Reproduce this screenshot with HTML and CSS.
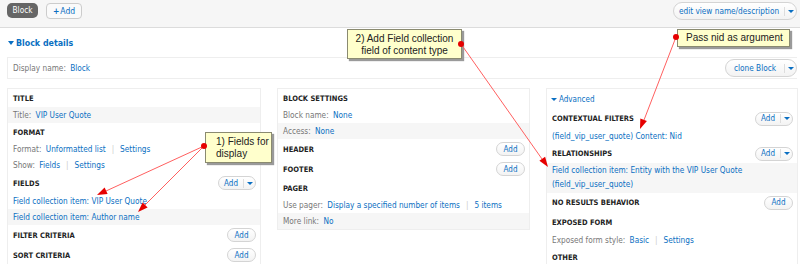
FILE: index.html
```html
<!DOCTYPE html>
<html>
<head>
    <title>Views UI - Block</title>
    <link rel="stylesheet" href="styles.css">
</head>
<body>
    <div class="tabs">
        <span class="tab-active">Block</span>
        <span class="tab-add"><b>+</b>Add</span>
        <span class="pill-btn edit-btn"><span class="lbl">edit view name/description</span><span class="caret"><i class="tri"></i></span></span>
    </div>

    <div class="details-head"><i class="tri big"></i>Block details</div>

    <div class="display-row">
        <span><span class="label">Display name:</span> <a>Block</a></span>
        <span class="pill-btn clone-btn"><span class="lbl">clone Block</span><span class="caret"><i class="tri"></i></span></span>
    </div>

    <div class="columns">
        <div class="col">
            <div class="head">Title</div>
            <div class="item alt"><span class="label">Title:</span> <a>VIP User Quote</a></div>
            <div class="head">Format</div>
            <div class="item"><span class="label">Format:</span> <a>Unformatted list</a><span class="sep">|</span><a>Settings</a></div>
            <div class="item"><span class="label">Show:</span> <a>Fields</a><span class="sep">|</span><a>Settings</a></div>
            <div class="head tall">Fields <span class="pill-btn add-drop"><span class="lbl">Add</span><span class="caret"><i class="tri"></i></span></span></div>
            <div class="item"><a>Field collection item: VIP User Quote</a></div>
            <div class="item alt"><a>Field collection item: Author name</a></div>
            <div class="head tall">Filter criteria <span class="pill-btn add-btn">Add</span></div>
            <div class="head tall">Sort criteria <span class="pill-btn add-btn">Add</span></div>
        </div>

        <div class="col">
            <div class="head">Block settings</div>
            <div class="item"><span class="label">Block name:</span> <a>None</a></div>
            <div class="item alt"><span class="label">Access:</span> <a>None</a></div>
            <div class="head tall">Header <span class="pill-btn add-btn">Add</span></div>
            <div class="head tall">Footer <span class="pill-btn add-btn">Add</span></div>
            <div class="head">Pager</div>
            <div class="item"><span class="label">Use pager:</span> <a>Display a specified number of items</a><span class="sep">|</span><a>5 items</a></div>
            <div class="item alt"><span class="label">More link:</span> <a>No</a></div>
        </div>

        <div class="col">
            <div class="adv"><i class="tri"></i>Advanced</div>
            <div class="head mid">Contextual filters <span class="pill-btn add-drop"><span class="lbl">Add</span><span class="caret"><i class="tri"></i></span></span></div>
            <div class="item"><a>(field_vip_user_quote) Content: Nid</a></div>
            <div class="head mid">Relationships <span class="pill-btn add-drop"><span class="lbl">Add</span><span class="caret"><i class="tri"></i></span></span></div>
            <div class="item multi alt"><a>Field collection item: Entity with the VIP User Quote<br>(field_vip_user_quote)</a></div>
            <div class="head mid">No results behavior <span class="pill-btn add-btn">Add</span></div>
            <div class="head tall">Exposed form</div>
            <div class="item"><span class="label">Exposed form style:</span> <a>Basic</a><span class="sep">|</span><a>Settings</a></div>
            <div class="head">Other</div>
        </div>
    </div>

    <!-- annotations -->
    <div class="note note-fields">1) Fields for<br>display</div>
    <div class="note note-collection">2) Add Field collection<br>field of content type</div>
    <div class="note note-nid">Pass nid as argument</div>

    <svg class="arrows" width="800" height="264" viewBox="0 0 800 264">
        <g stroke="#ff6060" stroke-width="1" fill="none">
            <path d="M204 146 L106 191"/>
            <path d="M204 146 L145 205"/>
            <path d="M461 44 L542 159"/>
            <path d="M676 37 L644 120"/>
        </g>
        <g fill="#e60000">
            <polygon points="97,195 107.6,194 104.6,187.6"/>
            <polygon points="138,212 147.6,207.4 142.6,202.4"/>
            <polygon points="548,167 545.1,156.8 539.4,160.8"/>
            <polygon points="640,129 646.9,121 640.3,118.4"/>
            <circle cx="204" cy="146" r="3"/>
            <circle cx="461" cy="44" r="3"/>
            <circle cx="676" cy="37" r="3"/>
        </g>
    </svg>
</body>
</html>
```

FILE: styles.css
```css
body {
    margin: 0;
    width: 800px;
    height: 264px;
    overflow: hidden;
    position: relative;
    background: #fff;
    color: #333;
    font-family: "DejaVu Sans Condensed", "DejaVu Sans", sans-serif;
    font-size: 8.2px;
}
a {
    color: #0a6fc2;
}
.label {
    color: #777;
    margin-right: 2px;
}
.sep {
    color: #ccc;
    margin: 0 6px;
}
.tri {
    display: inline-block;
    width: 0;
    height: 0;
    border-left: 3px solid transparent;
    border-right: 3px solid transparent;
    border-top: 3px solid #0a6fc2;
    vertical-align: middle;
}
.tri.big {
    border-left-width: 3.5px;
    border-right-width: 3.5px;
    border-top-width: 4px;
    margin-right: 2px;
}

/* top tabs */
.tabs {
    height: 28px;
    box-sizing: border-box;
    background: #f6f6f6;
    border-bottom: 1px solid #dcdcdc;
    display: flex;
    align-items: flex-start;
    padding: 3px 3px 0 7px;
}
.tab-active {
    background: #666;
    color: #fff;
    border-radius: 5px;
    height: 15px;
    line-height: 15px;
    width: 31px;
    text-align: center;
    font-size: 8.2px;
}
.tab-add {
    margin-left: 8px;
    width: 34px;
    height: 14px;
    line-height: 14px;
    border: 1px solid #ccc;
    border-radius: 4px;
    background: #fafafa;
    color: #0a6fc2;
    text-align: center;
    font-size: 8.5px;
}
.tab-add b {
    margin-right: 1px;
}

/* pill buttons */
.pill-btn {
    display: inline-flex;
    align-items: center;
    box-sizing: border-box;
    border: 1px solid #d4d4d4;
    border-radius: 9px;
    background: linear-gradient(#fff, #f3f3f3);
    color: #0a6fc2;
    font-weight: normal;
    text-transform: none;
    font-size: 8px;
}
.pill-btn .lbl {
    flex: 1;
    text-align: center;
}
.pill-btn .caret {
    width: 11px;
    height: 9px;
    border-left: 1px solid #ddd;
    display: flex;
    align-items: center;
    justify-content: center;
}
.edit-btn {
    margin-left: auto;
    margin-top: -1px;
    width: 124px;
    height: 18px;
    font-size: 8.2px;
}
.clone-btn {
    width: 72px;
    height: 18px;
    font-size: 8.2px;
}
.add-drop {
    width: 38px;
    height: 14px;
}
.add-btn {
    width: 29px;
    height: 14px;
    justify-content: center;
}

/* block details */
.details-head {
    height: 29px;
    padding-left: 8px;
    display: flex;
    align-items: center;
    color: #0a6fc2;
    font-weight: bold;
    font-size: 8.8px;
}
.display-row {
    margin: 0 3px 0 7px;
    height: 22px;
    box-sizing: border-box;
    border: 1px solid #eee;
    border-right: none;
    display: flex;
    align-items: center;
    justify-content: space-between;
    padding-left: 5px;
}

/* columns */
.columns {
    display: grid;
    grid-template-columns: 254px 253px 252px;
    column-gap: 16px;
    margin-top: 9px;
    padding-left: 7px;
    align-items: start;
}
.col {
    border: 1px solid #eee;
}
.head {
    height: 18px;
    padding: 0 4px 0 5px;
    display: flex;
    align-items: center;
    justify-content: space-between;
    font-weight: bold;
    font-size: 7.5px;
    text-transform: uppercase;
    color: #222;
}
.head.mid {
    height: 19px;
}
.head.tall {
    height: 20px;
}
.item {
    height: 16px;
    line-height: 16px;
    padding-left: 5px;
    white-space: nowrap;
}
.item.alt {
    background: #f6f6f6;
}
.item.multi {
    height: 30px;
    line-height: 14px;
    padding-top: 0;
}
.adv {
    height: 20px;
    padding-left: 4px;
    display: flex;
    align-items: center;
    color: #0a6fc2;
    font-size: 8px;
}
.adv .tri {
    margin-right: 2px;
}

/* annotation callouts */
.note {
    position: absolute;
    box-sizing: border-box;
    background: #ffffcc;
    border: 1px solid #8a8a70;
    box-shadow: 2px 2px 1px #9a9a9a;
    font-family: "Liberation Sans", Arial, sans-serif;
    font-size: 10px;
    line-height: 12px;
    color: #222;
    white-space: nowrap;
}
.note-fields {
    left: 205px;
    top: 132px;
    width: 67px;
    height: 31px;
    padding: 3px 0 0 10px;
}
.note-collection {
    left: 347px;
    top: 29px;
    width: 115px;
    height: 30px;
    padding-top: 3px;
    text-align: center;
}
.note-nid {
    left: 677px;
    top: 29px;
    width: 113px;
    height: 18px;
    padding: 2px 0 0 8px;
}
.arrows {
    position: absolute;
    left: 0;
    top: 0;
    pointer-events: none;
}
```
